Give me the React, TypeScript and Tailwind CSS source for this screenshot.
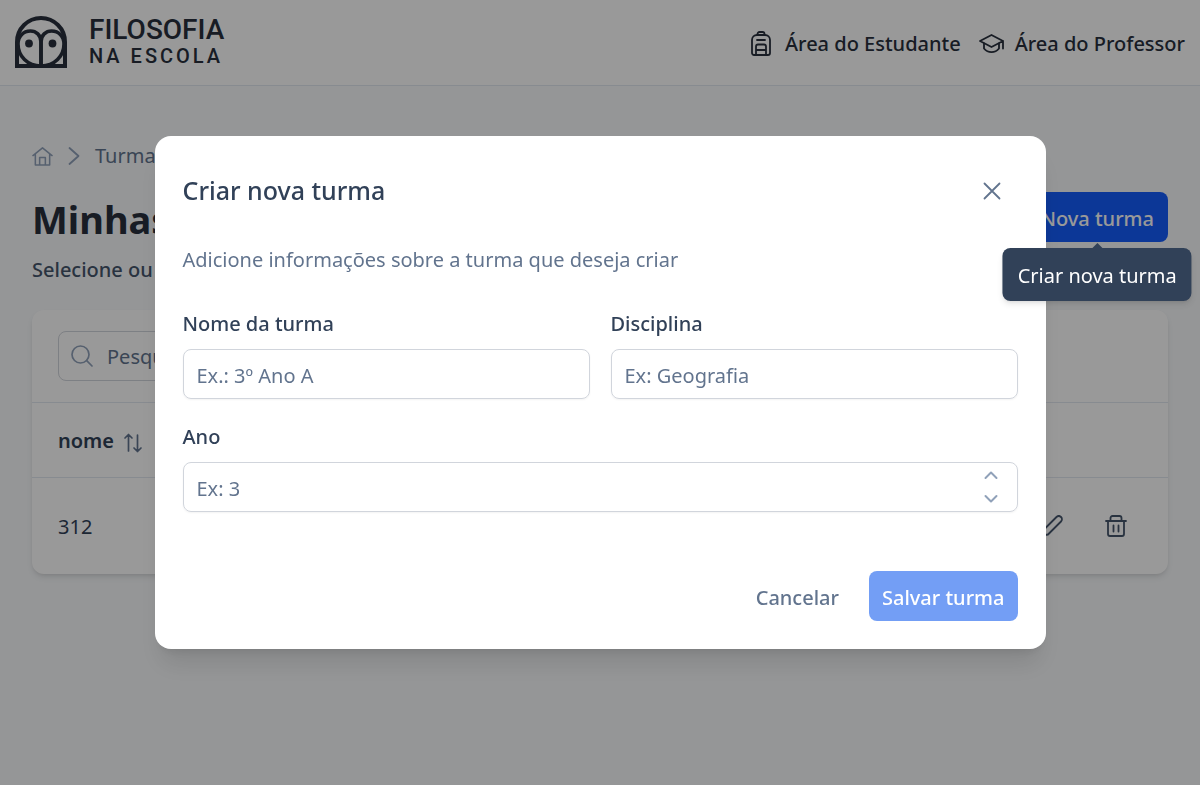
import React, { useState } from "react";

type IconProps = { className?: string };

const Logo = () => (
  <svg viewBox="0 0 52 52" className="size-[52px]" fill="none" stroke="currentColor">
    <path d="M2 50V26a24 24 0 0 1 48 0v24z" strokeWidth="4" />
    <path d="M26 50V26c0-7-5-11-10.500-11C8 15 3 20.500 3 28c0 12 9.500 22 23 22" strokeWidth="3.6" />
    <path d="M26 50V26c0-7 5-11 10.500-11C44 15 49 20.500 49 28c0 12-9.500 22-23 22" strokeWidth="3.6" />
    <circle cx="14" cy="27.5" r="3.9" fill="currentColor" stroke="none" />
    <circle cx="37.500" cy="27.5" r="3.9" fill="currentColor" stroke="none" />
  </svg>
);

const BackpackIcon = () => (
  <svg viewBox="0 0 20 25" className="h-[25px] w-5" fill="none" stroke="currentColor" strokeWidth="1.8" strokeLinecap="round" strokeLinejoin="round">
    <path d="M1 9a5 5 0 0 1 5-5h8a5 5 0 0 1 5 5v13a2 2 0 0 1-2 2H3a2 2 0 0 1-2-2z" />
    <path d="M6.500 4V3a2 2 0 0 1 2-2h3a2 2 0 0 1 2 2v1M6 9h8M5 24v-8.500a2 2 0 0 1 2-2h6a2 2 0 0 1 2 2V24M5 19h10" />
  </svg>
);

const GraduationIcon = () => (
  <svg viewBox="0 0 25 20" className="h-5 w-[25px]" fill="none" stroke="currentColor" strokeWidth="1.8" strokeLinecap="round" strokeLinejoin="round">
    <path d="m1 7 11.500-6L24 7l-11.500 6zM24 7v7.500" />
    <path d="M5 9.500v5c4 4.800 11 4.800 15 0v-5" />
  </svg>
);

const HomeIcon = ({ className }: IconProps) => (
  <svg viewBox="0 0 22 22" className={className} fill="none" stroke="currentColor" strokeWidth="1.6" strokeLinecap="round" strokeLinejoin="round">
    <path d="M1 10 11 2l10 8M3.500 8.500V20h15V8.500M8 20v-8h6v8" />
  </svg>
);

const ChevronIcon = ({ className }: IconProps) => (
  <svg viewBox="0 0 14 14" className={className} fill="none" stroke="currentColor" strokeWidth="2" strokeLinecap="round" strokeLinejoin="round">
    <path d="M1.500 10 7 4.500l5.500 5.500" />
  </svg>
);

const SeparatorIcon = ({ className }: IconProps) => (
  <svg viewBox="0 0 12 20" className={className} fill="none" stroke="currentColor" strokeWidth="1.8" strokeLinecap="round" strokeLinejoin="round">
    <path d="m1.500 2 9 8-9 8" />
  </svg>
);

const SearchIcon = ({ className }: IconProps) => (
  <svg viewBox="0 0 22 22" className={className} fill="none" stroke="currentColor" strokeWidth="1.7" strokeLinecap="round">
    <circle cx="9.500" cy="9.500" r="8.500" />
    <path d="m15.700 15.700 5.300 5.300" />
  </svg>
);

const SortIcon = ({ className }: IconProps) => (
  <svg viewBox="0 0 20 20" className={className} fill="none" stroke="currentColor" strokeWidth="1.7" strokeLinecap="round" strokeLinejoin="round">
    <path d="M5.500 18V1.500M2 5l3.500-3.500L9 5M14.500 2v16.500M11 15l3.500 3.500L18 15" />
  </svg>
);

const PencilIcon = ({ className }: IconProps) => (
  <svg viewBox="0 0 22 22" className={className} fill="none" stroke="currentColor" strokeWidth="1.8" strokeLinecap="round" strokeLinejoin="round">
    <path d="m1.500 20.500 1-5.500L15.500 2a3 3 0 0 1 4.500 4.500L7 19.500z" />
  </svg>
);

const TrashIcon = ({ className }: IconProps) => (
  <svg viewBox="0 0 22 22" className={className} fill="none" stroke="currentColor" strokeWidth="1.8" strokeLinecap="round" strokeLinejoin="round">
    <path d="M1 6h20M3 6v13a2 2 0 0 0 2 2h12a2 2 0 0 0 2-2V6M5.500 6V3a2 2 0 0 1 2-2h7a2 2 0 0 1 2 2v3M8.500 10.500v6M13.500 10.500v6" />
  </svg>
);

const CloseIcon = ({ className }: IconProps) => (
  <svg viewBox="0 0 18 18" className={className} fill="none" stroke="currentColor" strokeWidth="1.8" strokeLinecap="round">
    <path d="m1.500 1.500 15 15M16.500 1.500l-15 15" />
  </svg>
);

const Header = () => (
  <header className="flex h-[86px] items-center justify-between border-b border-slate-200 bg-white px-[15px] text-[#28303d]">
    <a href="#" className="flex items-center gap-[22px] pb-0.5">
      <Logo />
      <span className="flex flex-col font-[Roboto,sans-serif] font-medium">
        <span className="text-[28px] leading-7">FILOSOFIA</span>
        <span className="text-[20px] leading-6 tracking-[3px]">NA ESCOLA</span>
      </span>
    </a>
    <nav className="flex items-center gap-[18px] pt-0.5 text-[20px] font-medium">
      <a href="#" className="flex items-center gap-[14px]">
        <BackpackIcon />
        Área do Estudante
      </a>
      <a href="#" className="flex items-center gap-[11px]">
        <GraduationIcon />
        Área do Professor
      </a>
    </nav>
  </header>
);

const ClassesTable = () => (
  <section className="mt-6 rounded-xl bg-white shadow-md">
    <div className="px-[26px] py-[21px]">
      <label className="flex h-[50px] w-72 items-center gap-[14px] rounded-lg border border-gray-300 px-3 text-slate-500">
        <SearchIcon className="size-[22px] shrink-0 text-slate-400" />
        <input
          type="search"
          aria-label="Pesquisar turma"
          placeholder="Pesquisar"
          className="w-full pt-0.5 outline-none placeholder:text-slate-500"
        />
      </label>
    </div>
    <table className="w-full text-left text-slate-700">
      <thead>
        <tr className="h-[75px] border-y border-slate-200">
          <th className="px-[26px] pt-0.5 font-semibold">
            <span className="flex items-center gap-[9px]">
              nome
              <SortIcon className="mt-1 size-5 text-slate-500" />
            </span>
          </th>
          <th />
        </tr>
      </thead>
      <tbody>
        <tr className="h-24">
          <td className="px-[26px] pt-0.5">312</td>
          <td className="px-[41px]">
            <div className="flex justify-end gap-[42px] text-slate-600">
              <button type="button" aria-label="Editar">
                <PencilIcon className="size-[22px]" />
              </button>
              <button type="button" aria-label="Excluir">
                <TrashIcon className="size-[22px]" />
              </button>
            </div>
          </td>
        </tr>
      </tbody>
    </table>
  </section>
);

type FieldProps = {
  id: string;
  label: string;
  placeholder: string;
  className?: string;
  children?: React.ReactNode;
};

const Field = ({ id, label, placeholder, className = "", children }: FieldProps) => {
  const [value, setValue] = useState("");

  return (
    <div className={`flex flex-col gap-[11px] ${className}`}>
      <label htmlFor={id} className="leading-7 font-medium text-slate-700">
        {label}
      </label>
      <div className="flex h-[50px] items-center rounded-lg border border-gray-300 pr-4 shadow-xs">
        <input
          id={id}
          type="text"
          value={value}
          onChange={(e) => setValue(e.target.value)}
          placeholder={placeholder}
          className="h-full min-w-0 flex-1 rounded-lg px-[13px] pt-0.5 outline-none placeholder:text-slate-500"
        />
        {children}
      </div>
    </div>
  );
};

const CreateClassDialog = () => (
  <div
    role="dialog"
    aria-labelledby="dialog-title"
    className="w-full max-w-[891px] rounded-2xl bg-white px-7 py-7 text-slate-500 shadow-xl"
  >
    <div className="flex h-[54px] items-center justify-between">
      <h2 id="dialog-title" className="text-[25px] font-medium text-slate-700">
        Criar nova turma
      </h2>
      <button type="button" aria-label="Fechar" className="flex size-[52px] items-center justify-center">
        <CloseIcon className="size-[18px]" />
      </button>
    </div>
    <p className="mt-[26px] leading-8">Adicione informações sobre a turma que deseja criar</p>
    <form>
      <div className="mt-[34px] grid grid-cols-2 gap-x-[21px] gap-y-6">
        <Field id="name" label="Nome da turma" placeholder="Ex.: 3º Ano A" />
        <Field id="subject" label="Disciplina" placeholder="Ex: Geografia" />
        <Field id="year" label="Ano" placeholder="Ex: 3" className="col-span-2">
          <div className="flex flex-col gap-2.5 pr-[3px] text-slate-400">
            <button type="button" aria-label="Aumentar">
              <ChevronIcon className="size-[14px]" />
            </button>
            <button type="button" aria-label="Diminuir">
              <ChevronIcon className="size-[14px] rotate-180" />
            </button>
          </div>
        </Field>
      </div>
      <div className="mt-[59px] flex justify-end gap-4 font-medium">
        <button type="button" className="h-[50px] px-[14px] pt-[3px]">
          Cancelar
        </button>
        <button type="submit" disabled className="h-[50px] rounded-lg bg-[#739ef5] px-[13px] pt-[3px] text-white">
          Salvar turma
        </button>
      </div>
    </form>
  </div>
);

export default function App() {
  return (
    <div className="min-h-screen bg-slate-50 font-['Noto_Sans',sans-serif] text-[20px]">
      <Header />
      <main className="px-8 pt-[54px]">
        <nav className="flex h-8 items-center gap-[15px] text-slate-500">
          <a href="#" aria-label="Início">
            <HomeIcon className="size-[21px] text-slate-400" />
          </a>
          <SeparatorIcon className="h-5 w-3 text-slate-400" />
          <a href="#">Turmas</a>
        </nav>
        <div className="mt-5 flex items-start justify-between">
          <div>
            <h1 className="text-[38px] leading-[54px] font-bold text-[#28303d]">Minhas turmas</h1>
            <p className="mt-2.5 mb-0.5 leading-7 font-medium text-slate-600">
              Selecione ou crie uma turma
            </p>
          </div>
          <div className="relative">
            <button type="button" className="h-[50px] rounded-lg bg-blue-600 px-[14px] pt-[3px] font-medium text-white">
              Nova turma
            </button>
            <div
              role="tooltip"
              className="absolute top-full left-1/2 z-20 mt-[6px] flex h-[53px] -translate-x-1/2 items-center rounded-lg bg-slate-700 px-[15px] pt-0.5 whitespace-nowrap text-white shadow-md"
            >
              <span className="absolute -top-[5px] left-1/2 -translate-x-1/2 border-x-[5px] border-b-[5px] border-x-transparent border-b-slate-700" />
              Criar nova turma
            </div>
          </div>
        </div>
        <ClassesTable />
      </main>
      <div className="fixed inset-0 z-10 flex items-center justify-center bg-black/40 p-4">
        <CreateClassDialog />
      </div>
    </div>
  );
}
